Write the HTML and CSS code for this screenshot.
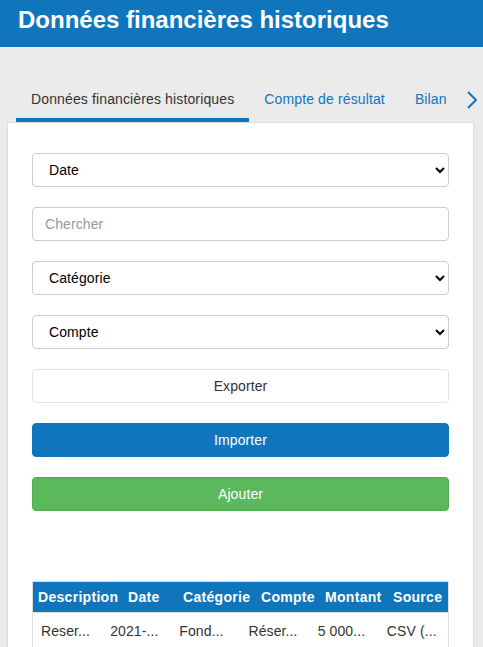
FILE: index.html
```html
<!DOCTYPE html>
<html lang="fr">
<head>
<meta charset="utf-8">
<title>Données financières historiques</title>
<link rel="stylesheet" href="styles.css">
</head>
<body>
<header class="topbar">
  <h1 class="title">Données financières historiques</h1>
</header>
<main class="page">
  <nav class="tabs">
    <a class="tab active">Données financières historiques</a>
    <a class="tab">Compte de résultat</a>
    <a class="tab">Bilan</a>
    <span class="tab-next">
      <svg width="12" height="18" viewBox="0 0 12 18"><path d="M2 1 L10 9 L2 17" fill="none" stroke="#0f76bd" stroke-width="2"/></svg>
    </span>
  </nav>
  <section class="card">
    <div class="controls">
      <select class="field"><option>Date</option></select>
      <input class="field input" type="text" placeholder="Chercher">
      <select class="field"><option>Catégorie</option></select>
      <select class="field"><option>Compte</option></select>
      <button class="btn btn-default">Exporter</button>
      <button class="btn btn-primary">Importer</button>
      <button class="btn btn-success">Ajouter</button>
    </div>
    <div class="table">
      <div class="thead">
        <div class="th">Description</div>
        <div class="th">Date</div>
        <div class="th">Catégorie</div>
        <div class="th">Compte</div>
        <div class="th">Montant</div>
        <div class="th">Source</div>
      </div>
      <div class="tr">
        <div class="td">Reser...</div>
        <div class="td">2021-...</div>
        <div class="td">Fond...</div>
        <div class="td">Réser...</div>
        <div class="td">5 000...</div>
        <div class="td">CSV (...</div>
      </div>
    </div>
  </section>
</main>
</body>
</html>
```
FILE: styles.css
```css
* { box-sizing: border-box; }
html, body { margin: 0; padding: 0; }
body {
  background: #ebebeb;
  font-family: "Liberation Sans", Arial, sans-serif;
  font-size: 14px;
  color: #333;
  overflow: hidden;
  height: 647px;
}
.topbar {
  background: #0f76bd;
  height: 47px;
  padding: 0 18px;
  display: flex;
  align-items: center;
}
.title {
  margin: 0;
  color: #fff;
  font-size: 24px;
  font-weight: bold;
  line-height: 1;
  position: relative;
  top: -4px;
}
.page {
  padding: 0 9px 0 7px;
}
.tabs {
  display: flex;
  align-items: stretch;
  margin: 30px 0 0 9px;
  height: 45px;
}
.tab {
  display: flex;
  align-items: center;
  padding: 2px 15px 0;
  color: #0f76bd;
  font-size: 14px;
  letter-spacing: 0.13px;
  white-space: nowrap;
  border-bottom: 4px solid transparent;
}
.tab.active {
  color: #333;
  border-bottom-color: #0f76bd;
}
.tab-next {
  display: flex;
  align-items: center;
  padding: 0 0 0 4px;
}
.card {
  background: #fff;
  border: 1px solid #ddd;
  border-bottom: none;
  padding: 30px 24px 0;
  height: 530px;
}
.controls {
  display: flex;
  flex-direction: column;
  gap: 20px;
}
.field {
  width: 100%;
  height: 34px;
  border: 1px solid #ccc;
  border-radius: 4px;
  background: #fff;
  font-family: "Liberation Sans", Arial, sans-serif;
  font-size: 14px;
  letter-spacing: 0.1px;
  color: #000;
  padding: 0 12px;
}
.input::placeholder { color: #999; }
.btn {
  height: 34px;
  width: 100%;
  border-radius: 4px;
  font-family: "Liberation Sans", Arial, sans-serif;
  font-size: 14px;
  letter-spacing: 0.1px;
  cursor: pointer;
}
.btn-default {
  background: #fff;
  border: 1px solid #e3e3e3;
  color: #333;
}
.btn-primary {
  background: #0f76bd;
  border: 1px solid #0f76bd;
  color: #fff;
}
.btn-success {
  background: #5cb85c;
  border: 1px solid #4cae4c;
  color: #fff;
}
.table {
  margin-top: 70px;
  border: 1px solid #ddd;
  width: 417px;
}
.thead {
  display: grid;
  grid-template-columns: 90px 55px 78px 64px 68px 1fr;
  background: #0f76bd;
  height: 31px;
  border-bottom: 1px solid #ddd;
  align-items: center;
}
.th {
  color: #fff;
  font-weight: bold;
  font-size: 14px;
  letter-spacing: 0.3px;
  padding: 0 5px;
  white-space: nowrap;
}
.tr {
  display: grid;
  grid-template-columns: repeat(6, 1fr);
  height: 36px;
  align-items: center;
}
.td {
  padding: 0 8px;
  white-space: nowrap;
  color: #333;
  letter-spacing: 0.1px;
}
```
